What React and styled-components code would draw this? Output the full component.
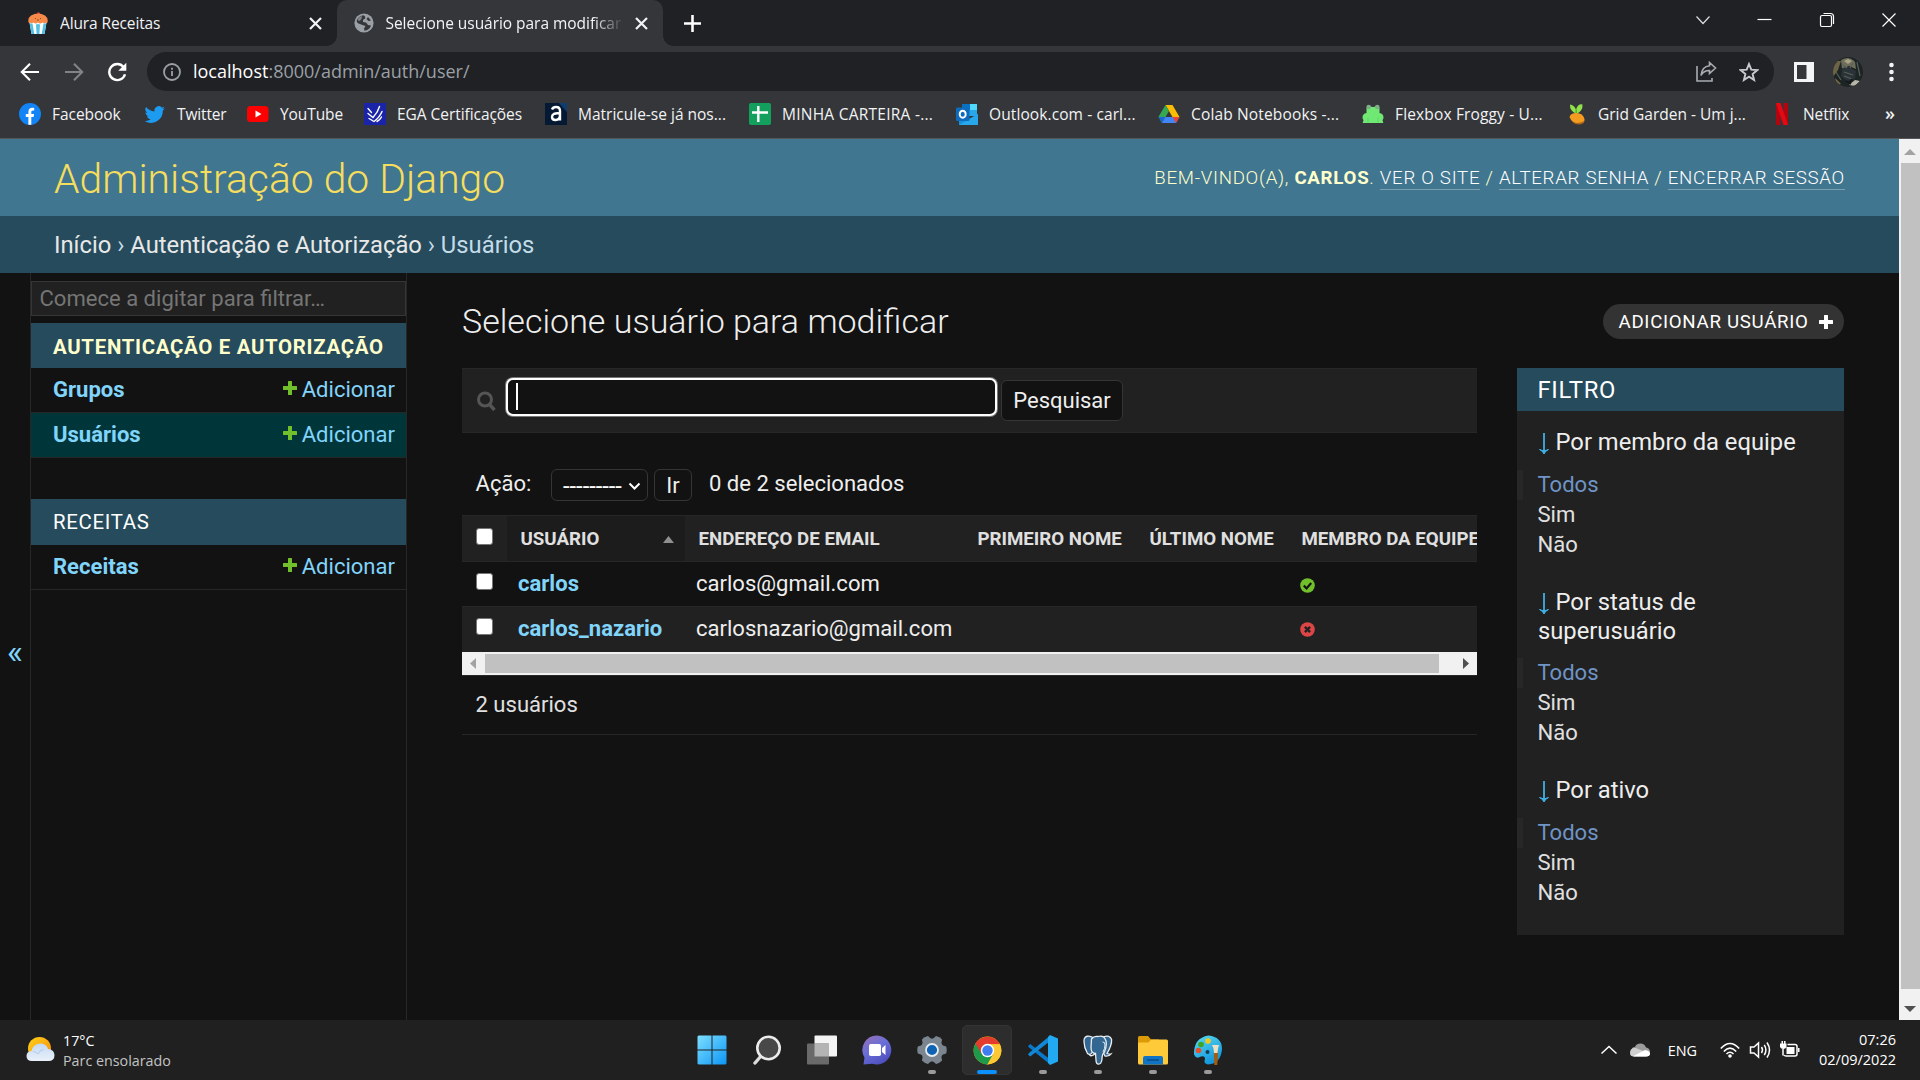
import React from "react";
import styled, { createGlobalStyle, css } from "styled-components";

const ui = '"Open Sans", "Noto Sans", sans-serif';
const roboto = 'Roboto, "Noto Sans", sans-serif';

const GlobalStyle = createGlobalStyle`
  *, *::before, *::after { box-sizing: border-box; }
  body { margin: 0; background: #121212; overflow: hidden; }
  svg { display: block; flex: none; }
`;

const Screen = styled.div`
  width: 1920px;
  height: 1080px;
  display: flex;
  flex-direction: column;
  overflow: hidden;
  background: #121212;
  white-space: nowrap;
`;

/* ---------- browser window ---------- */

const TabStrip = styled.div`
  height: 46px;
  flex: none;
  display: flex;
  align-items: stretch;
  background: #202124;
  color: #f1f3f4;
  font: 15.5px/20px ${ui};
`;

const Tab = styled.div`
  position: relative;
  display: flex;
  align-items: center;
  width: ${(p) => p.$width}px;
  padding: 0 ${(p) => p.$right}px 0 ${(p) => p.$left}px;
  gap: ${(p) => p.$gap}px;
  ${(p) =>
    p.$active &&
    css`
      background: #35363a;
      border-radius: 10px 10px 0 0;
      &::before,
      &::after {
        content: "";
        position: absolute;
        bottom: 0;
        width: 10px;
        height: 10px;
      }
      &::before {
        left: -10px;
        background: radial-gradient(circle at 0 0, transparent 9.5px, #35363a 10px);
      }
      &::after {
        right: -10px;
        background: radial-gradient(circle at 100% 0, transparent 9.5px, #35363a 10px);
      }
    `}
`;

const TabTitle = styled.span`
  flex: 1;
  min-width: 0;
  overflow: hidden;
  letter-spacing: ${(p) => p.$spacing || 0}px;
  ${(p) => p.$fade && "mask-image: linear-gradient(90deg, #000 87%, transparent 100%);"}
`;

const NewTab = styled.div`
  display: flex;
  align-items: center;
  padding-left: 21px;
`;

const WindowButtons = styled.div`
  margin-left: auto;
  display: flex;
  align-items: flex-start;
  padding: 12px 23px 0 0;
  gap: 46px;
`;

const Toolbar = styled.div`
  height: 50px;
  flex: none;
  display: flex;
  align-items: center;
  background: #35363a;
  padding: 1px 20px 0 20px;
`;

const NavButtons = styled.div`
  display: flex;
  width: 127px;
  gap: 23.5px;
`;

const AddressBar = styled.div`
  width: 1627px;
  height: 39px;
  border-radius: 20px;
  background: #202124;
  display: flex;
  align-items: center;
  padding: 0 15px 0 16px;
  color: #9aa0a6;
  font: 18px/24px ${ui};
`;

const Url = styled.span`
  flex: 1;
  padding: 0 0 1px 12px;
`;

const Host = styled.span`
  color: #fff;
`;

const AddressActions = styled.div`
  display: flex;
  gap: 22px;
  align-items: center;
`;

const ToolbarActions = styled.div`
  display: flex;
  align-items: center;
  padding-left: 20px;
`;

const AvatarWrap = styled.div`
  padding: 0 26px 0 19px;
`;

const Bookmarks = styled.div`
  height: 43px;
  flex: none;
  display: flex;
  align-items: center;
  background: #35363a;
  border-bottom: 1px solid #56575b;
  padding: 0 0 6px 19px;
  color: #f1f3f4;
  font: 15.5px/20px ${ui};
`;

const Bookmark = styled.div`
  width: ${(p) => p.$width}px;
  display: flex;
  align-items: center;
  gap: 11px;
  letter-spacing: ${(p) => p.$spacing || 0}px;
`;

const Overflow = styled.span`
  font: 600 18px/20px ${ui};
  padding-bottom: 3px;
  margin-left: -1px;
`;

const Viewport = styled.div`
  height: 881px;
  flex: none;
  display: flex;
  background: #121212;
`;

const PageScroll = styled.div`
  width: 21px;
  background: #f1f1f1;
  display: flex;
  flex-direction: column;
  align-items: center;
  justify-content: space-between;
`;

const PageThumb = styled.div`
  flex: 1;
  align-self: stretch;
  margin-left: 2px;
  background: #c1c1c1;
`;

const ScrollArrow = styled.div`
  height: ${(p) => p.$height}px;
  display: flex;
  align-items: center;
  padding-top: ${(p) => p.$shift || 0}px;
`;

/* ---------- admin page ---------- */

const Page = styled.div`
  flex: 1;
  min-width: 0;
  display: flex;
  flex-direction: column;
  font-family: ${roboto};
  color: #eee;
`;

const Header = styled.header`
  height: 77px;
  flex: none;
  display: flex;
  align-items: center;
  justify-content: space-between;
  padding: 1px 54px 0 55px;
  background: #417690;
`;

const SiteName = styled.h1`
  margin: 2px 0 0 -1px;
  font-size: 40.85px;
  line-height: 50px;
  font-weight: 300;
  color: #f5dd5d;
`;

const UserTools = styled.div`
  font-size: 18.7px;
  line-height: 24px;
  font-weight: 300;
  letter-spacing: 0.71px;
  text-transform: uppercase;
  color: #ffc;
  padding-bottom: 1px;
  strong { font-weight: 700; }
`;

const ToolLink = styled.a`
  color: #fff;
  border-bottom: 1px solid rgba(255, 255, 255, 0.3);
`;

const Breadcrumbs = styled.div`
  height: 57px;
  flex: none;
  padding: 1px 0 0 54px;
  background: #264b5d;
  color: #c4dce8;
  font-size: 23.8px;
  line-height: 57px;
  a { color: #e8e8e8; }
`;

const Columns = styled.div`
  flex: 1;
  min-height: 0;
  display: flex;
`;

const Toggle = styled.div`
  width: 30px;
  display: flex;
  align-items: center;
  justify-content: center;
  padding-top: 8px;
  color: #81d4fa;
  font-size: 34px;
`;

const Sidebar = styled.nav`
  width: 377px;
  border: solid #272727;
  border-width: 0 1px;
  padding-top: 8px;
`;

const QuickFilter = styled.div`
  height: 35px;
  margin-bottom: 7px;
  border: 1px solid #353535;
  background: #212121;
  color: #757575;
  padding-left: 7.5px;
  font-size: 22.05px;
  line-height: 33px;
`;

const AppGroup = styled.section`
  margin-bottom: 41px;
`;

const Caption = styled.h2`
  margin: 0;
  height: ${(p) => (p.$current ? 45 : 46)}px;
  line-height: 46px;
  padding: ${(p) => (p.$current ? 1 : 0)}px 0 0 22px;
  background: #264b5d;
  color: ${(p) => (p.$current ? "#ffc" : "#fff")};
  font-size: 20.4px;
  font-weight: ${(p) => (p.$current ? 700 : 400)};
  letter-spacing: 0.7px;
  text-transform: uppercase;
`;

const ModelRow = styled.div`
  height: 45px;
  display: flex;
  align-items: center;
  padding: 0 11px 1px 22px;
  border-bottom: 1px solid #272727;
  background: ${(p) => (p.$current ? "#00363a" : "transparent")};
  color: #81d4fa;
  font-size: 22.05px;
  line-height: 30px;
`;

const ModelName = styled.a`
  flex: 1;
  font-weight: 700;
`;

const AddLink = styled.a`
  display: flex;
  align-items: center;
  gap: 5px;
  svg { margin-bottom: 4px; }
`;

const Content = styled.main`
  flex: 1;
  padding: 31px 55px 0 55px;
`;

const TitleRow = styled.div`
  height: 35px;
  display: flex;
  align-items: center;
  justify-content: space-between;
  margin-bottom: 29px;
`;

const PageTitle = styled.h1`
  margin: -1px 0 0;
  font-size: 34px;
  line-height: 40px;
  font-weight: 300;
`;

const AddUser = styled.a`
  width: 241px;
  height: 35px;
  display: flex;
  align-items: center;
  padding: 0 11px 0 15.5px;
  justify-content: space-between;
  border-radius: 18px;
  background: #333;
  color: #fff;
  font-size: 18.7px;
  letter-spacing: 0.7px;
  text-transform: uppercase;
`;

const Changelist = styled.div`
  display: flex;
  align-items: flex-start;
  gap: 40px;
`;

const Module = styled.div`
  width: 1015px;
`;

const SearchBar = styled.div`
  height: 65px;
  display: flex;
  align-items: center;
  padding: 0 0 0 14.5px;
  border: solid #272727;
  border-width: 1px 0;
  background: #212121;
`;

const SearchInput = styled.div`
  width: 491px;
  height: 38px;
  margin: 0 4.5px 8px 10px;
  border: 2px solid #fff;
  border-radius: 7px;
  box-shadow: 0 0 0 1px #777;
  background: #121212;
  display: flex;
  align-items: center;
  padding-left: 8px;
`;

const Caret = styled.div`
  width: 2px;
  height: 27px;
  background: #fff;
`;

const SearchButton = styled.div`
  width: 122px;
  height: 41px;
  border: 1px solid #353535;
  border-radius: 6px;
  background: #121212;
  text-align: center;
  font-size: 22px;
  line-height: 39px;
`;

const Actions = styled.div`
  height: 82px;
  display: flex;
  align-items: center;
  padding: 22px 0 0 13.5px;
  font-size: 22.05px;
  line-height: 32px;
`;

const ActionLabel = styled.span`
  width: 75.5px;
  margin-top: -3px;
`;

const Select = styled.div`
  width: 97px;
  height: 32px;
  display: flex;
  align-items: center;
  justify-content: space-between;
  padding: 2px 6px 0 11px;
  border: 1px solid #353535;
  border-radius: 6px;
  font-size: 23.7px;
  color: #fff;
`;

const GoButton = styled.div`
  width: 38px;
  height: 32px;
  margin: 0 17px 0 6px;
  border: 1px solid #353535;
  border-radius: 6px;
  text-align: center;
  line-height: 31px;
`;

const Counter = styled.span`
  margin-top: -2px;
`;

const Results = styled.div`
  overflow: hidden;
  border-bottom: 1px solid #272727;
`;

const columns = "45px 178px 279px 172px 152px 240px";

const HeadRow = styled.div`
  height: 47px;
  display: grid;
  grid-template-columns: ${columns};
  border: solid #272727;
  border-width: 1px 0;
  background: #212121;
  font-size: 18.7px;
  font-weight: 700;
  line-height: 45px;
  color: #e0e0e0;
`;

const HeadCell = styled.div`
  height: 45px;
  padding: 1px 11px 0 13.5px;
  display: flex;
  align-items: center;
  justify-content: space-between;
  background: ${(p) => (p.$sorted ? "#1c1c1c" : "transparent")};
`;

const Row = styled.div`
  height: ${(p) => p.$height}px;
  display: grid;
  grid-template-columns: ${columns};
  align-items: center;
  padding-bottom: ${(p) => (p.$alt ? 2 : 0)}px;
  background: ${(p) => (p.$alt ? "#212121" : "transparent")};
  border-top: ${(p) => (p.$alt ? "1px solid #272727" : "0")};
  font-size: 22.05px;
  line-height: 30px;
`;

const Cell = styled.div`
  padding: ${(p) => (p.$icon ? "2px 0 0 12px" : "0 0 0 11px")};
`;

const UserLink = styled.a`
  font-weight: 700;
  color: #81d4fa;
`;

const CheckCell = styled.div`
  padding: 0 0 5px 13.5px;
  align-self: center;
`;

const Checkbox = styled.div`
  width: 17px;
  height: 17px;
  border: 1px solid #767676;
  border-radius: 3px;
  background: #fff;
`;

const HScroll = styled.div`
  height: 23px;
  display: flex;
  align-items: center;
  background: #f1f1f1;
`;

const HArrow = styled.div`
  width: ${(p) => p.$width}px;
  padding-left: ${(p) => p.$inset}px;
`;

const HThumb = styled.div`
  flex: 1;
  height: 19px;
  background: #c1c1c1;
`;

const Paginator = styled.p`
  margin: 0;
  height: 59px;
  padding: 0 0 0 13.5px;
  border-bottom: 1px solid #272727;
  color: #e0e0e0;
  font-size: 22.05px;
  line-height: 57px;
`;

const FilterPanel = styled.aside`
  width: 327px;
  height: 567px;
  background: #212121;
`;

const FilterHead = styled.h2`
  margin: 0;
  height: 43px;
  padding: 1px 0 0 20.5px;
  background: #264b5d;
  color: #fff;
  font-size: 23.8px;
  font-weight: 400;
  line-height: 43px;
  letter-spacing: 0.69px;
  text-transform: uppercase;
`;

const FilterTitle = styled.h3`
  margin: 0;
  padding: ${(p) => (p.$first ? "16.5px 30px 14px 21px" : "28px 30px 13px 21px")};
  font-size: 23.75px;
  font-weight: 400;
  line-height: 28.5px;
  white-space: normal;
  svg {
    display: inline-block;
    vertical-align: -5px;
    margin: 0 6.5px 0 1px;
  }
`;

const FilterItem = styled.div`
  height: 30px;
  padding-left: ${(p) => (p.$on ? 14.5 : 20.5)}px;
  border-left: ${(p) => (p.$on ? "6px solid #272727" : "0")};
  color: ${(p) => (p.$on ? "#6f94c6" : "#e0e0e0")};
  font-size: 22.05px;
  line-height: 30.5px;
`;

/* ---------- taskbar ---------- */

const Taskbar = styled.div`
  height: 60px;
  flex: none;
  display: flex;
  justify-content: space-between;
  background: #202020;
  color: #fff;
  font: 14.3px/20px ${ui};
`;

const Weather = styled.div`
  width: 687px;
  display: flex;
  align-items: center;
  gap: 8px;
  padding: 0 0 0 26px;
  svg { margin-bottom: 3px; }
`;

const WeatherText = styled.div`
  display: flex;
  flex-direction: column;
  padding-top: 2px;
  span:last-child { color: #c3c3c3; }
`;

const Apps = styled.div`
  display: flex;
  flex: 1;
  gap: 5.1px;
  padding-top: 5px;
`;

const AppButton = styled.div`
  width: 50px;
  height: 50px;
  position: relative;
  display: flex;
  align-items: center;
  justify-content: center;
  border-radius: 5px;
  background: ${(p) => (p.$active ? "#2d2d2d" : "transparent")};
  border: 1px solid ${(p) => (p.$active ? "#343434" : "transparent")};
  &::after {
    content: "";
    position: absolute;
    bottom: 0;
    left: 50%;
    transform: translateX(-50%);
    height: 4px;
    border-radius: 2px;
    width: ${(p) => (p.$active ? 20 : p.$open ? 8 : 0)}px;
    background: ${(p) => (p.$active ? "#0a90ff" : "#9a9a9a")};
  }
`;

const Tray = styled.div`
  display: flex;
  align-items: center;
  padding-right: 24px;
`;

const Lang = styled.span`
  margin: 0 23px 0 18px;
  padding-top: 1px;
  font-size: 14.4px;
`;

const Clock = styled.div`
  width: 96px;
  display: flex;
  flex-direction: column;
  text-align: right;
  font-size: 14.5px;
`;

/* ---------- icons ---------- */

const Cross = ({ size = 13, w = 2.2 }) => (
  <svg width={size} height={size} viewBox="0 0 13 13" stroke="#f1f3f4" strokeWidth={w} strokeLinecap="butt">
    <path d="M1 1l11 11M12 1L1 12" />
  </svg>
);

const CupcakeIcon = () => (
  <svg width="20" height="22" viewBox="0 0 20 22">
    <circle cx="10.5" cy="2" r="1.7" fill="#d93a3f" />
    <path d="M3 3.5Q10-.5 17 3.5 20.500 6 19.500 10.500Q17 12.500 14.500 11 12 13 10 11 8 13 5.500 11 3 12.500.5 10.500-.5 6 3 3.500z" fill="#f58a4b" />
    <path d="M1.500 10.500q2 1.500 4 0 2.500 2 4.500 0 2 2 4.500 0 2 1.500 4 0L16.500 22h-13z" fill="#fff" />
    <path d="M4.500 11.500l1.800 10.500H3.500L1.700 11.500zM10 12l2 .5-.6 9.500H8.600L8 12.500zM15.500 11.500h2.800L16.500 22h-2.800z" fill="#4fc0e3" />
    <path d="M7 6.500h1M12 6.500h1M9 8h2" stroke="#9c4a20" />
  </svg>
);

const GlobeIcon = () => (
  <svg width="20" height="20" viewBox="0 0 20 20">
    <circle cx="10" cy="10" r="9.600" fill="#9aa0a6" />
    <path d="M3 6.500Q5 3 9.500 2.300 12 3.500 11 5.500L9 7v2l3 .5 2 2.500 3 .5Q15.500 17 10.500 17.800L10 15.500 11.500 13 8.500 12 4.500 10.500Q2 9 3 6.500zM14 4l3 3.500-2.500.5-2-2z" fill="#35363a" />
    <path d="M3.500 7Q4 4.500 8 3L7.500 6 5.500 8zM7 12.500l3.500 1-1.500 3Q6 15 5 12z" fill="#9aa0a6" opacity=".75" />
  </svg>
);

const FacebookIcon = () => (
  <svg width="22" height="22" viewBox="0 0 22 22">
    <circle cx="11" cy="11" r="11" fill="#1284f5" />
    <path d="M9.400 21.800V14H6.800v-3h2.600V8.800c0-2.700 1.500-4.100 3.900-4.100.9 0 1.900.2 1.900.2v2.500h-1.300c-1.200 0-1.600.8-1.600 1.600v2h2.800l-.5 3h-2.300v7.800z" fill="#fff" />
  </svg>
);

const TwitterIcon = () => (
  <svg width="22" height="22" viewBox="0 0 26 26">
    <path fill="#1d9bf0" d="M24.600 6.100c-.9.400-1.800.7-2.800.8 1-.6 1.800-1.600 2.200-2.700-1 .6-2 1-3.100 1.200a4.900 4.900 0 0 0-8.400 4.500C8.400 9.700 4.800 7.800 2.400 4.800a4.900 4.900 0 0 0 1.500 6.600c-.8 0-1.600-.2-2.200-.6v.1c0 2.400 1.700 4.400 3.900 4.800-.7.200-1.500.2-2.200.1.600 2 2.400 3.400 4.600 3.400A9.900 9.900 0 0 1 .7 21.200a13.900 13.900 0 0 0 21.500-12.400c1-.7 1.800-1.600 2.400-2.700z" />
  </svg>
);

const YoutubeIcon = () => (
  <svg width="22" height="16" viewBox="0 0 22 16">
    <rect width="21.500" height="16" rx="3.500" fill="#f00" />
    <path d="M8.500 4.500v7l6-3.500z" fill="#fff" />
  </svg>
);

const EgaIcon = () => (
  <svg width="22" height="22" viewBox="0 0 22 22">
    <rect width="22" height="22" fill="#1a24a8" />
    <g fill="none" stroke="#fff" strokeWidth="1.400" strokeLinecap="round">
      <path d="M4 5.500L7.500 9.500M4 10.500L9 14.500Q14 9 15.500 3.500M5 15.500L10 18.500Q15.500 14.500 18 8.500M13 18.500Q16 17 17.500 14" />
    </g>
  </svg>
);

const AluraIcon = () => (
  <svg width="22" height="22" viewBox="0 0 22 22">
    <rect width="22" height="22" fill="#051933" />
    <path d="M14 0h8v9z" fill="#0e3e70" />
    <path d="M7 6.500Q8 4 11 4q4 0 4 4v9.500M15 10.500Q7 9.500 7 14q0 3 3.500 3 4.500 0 4.500-5" fill="none" stroke="#fff" strokeWidth="2.400" />
  </svg>
);

const SheetIcon = () => (
  <svg width="22" height="22" viewBox="0 0 22 22">
    <rect width="22" height="22" rx="2" fill="#12a05c" />
    <path d="M9.300 3v16M3 9.500h16" stroke="#fff" strokeWidth="2.400" />
  </svg>
);

const OutlookIcon = () => (
  <svg width="22" height="22" viewBox="0 0 22 22">
    <path d="M6 1h15v12H6z" fill="#28a8ea" />
    <path d="M14 1h7v6h-7z" fill="#50d9ff" />
    <path d="M6 1h8v6H6z" fill="#0a70c0" />
    <path d="M3 11l10 5 9-5v11H3z" fill="#1490df" />
    <path d="M3 22l19-11v10q0 1-1 1z" fill="#28a8ea" />
    <rect y="4.500" width="13.500" height="13.500" rx="1.500" fill="#0f6cbd" />
    <ellipse cx="6.700" cy="11.200" rx="3" ry="3.500" fill="none" stroke="#fff" strokeWidth="1.900" />
  </svg>
);

const DriveIcon = () => (
  <svg width="22" height="20" viewBox="0 0 22 20">
    <path d="M7.500 1h7l7 12h-7z" fill="#fbbc04" />
    <path d="M7.500 1L11 7 4 19 .5 12.800z" fill="#34a853" />
    <path d="M7.200 13h14.300L18 19H4z" fill="#4285f4" />
    <path d="M14.500 13h7L18 19z" fill="#ea4335" />
    <path d="M7.200 13H.500L4 19z" fill="#1967d2" />
  </svg>
);

const FrogIcon = () => (
  <svg width="22" height="20" viewBox="0 0 22 20">
    <path d="M4.500 4Q5 1.500 7.500 2q1.500 1 3.500 1t3.500-1q2.500-.5 3 2v5q4 .5 4 4.500 0 1.500-1 2.500l.8 3H.7l.8-3q-1-1-1-2.500 0-4 4-4.500z" fill="#6fe874" />
    <circle cx="6.700" cy="3" r="2.300" fill="#7fae88" />
    <circle cx="15.300" cy="3" r="2.300" fill="#7fae88" />
    <path d="M6 18.500v-5M16 18.500v-5" stroke="#5fd665" />
  </svg>
);

const CarrotIcon = () => (
  <svg width="20" height="22" viewBox="0 0 20 22">
    <path d="M9.500 11Q2.500 8 3 1.500 7 2 9 6.500 11 .5 15.500 1.500 16 8 9.500 11z" fill="#8fe04a" />
    <path d="M9.200 11V6.500" stroke="#58a826" strokeWidth="1.400" />
    <path d="M2.500 14q1-3.800 7-4 6.500.2 8 6 .5 4-4.500 5-8 0-10.500-7z" fill="#f39c1f" />
    <path d="M5 18.500q5 3 12.500-.5-1 3.500-5.500 3.500-4.500 0-7-3z" fill="#a8641a" />
  </svg>
);

const NetflixIcon = () => (
  <svg width="20" height="22" viewBox="0 0 20 22">
    <path d="M4 0h4.500v22H4zM11.500 0H16v22h-4.500z" fill="#b1060f" />
    <path d="M4 0h4.500L16 22h-4.500z" fill="#e50914" />
  </svg>
);

const PlusIcon = ({ color = "#70bf2b" }) => (
  <svg width="14" height="14" viewBox="0 0 14 14">
    <path d="M5.600 0h2.800q.6 0 .6.600V5h4.400q.6 0 .6.600v2.800q0 .6-.6.600H9v4.400q0 .6-.6.600H5.600q-.6 0-.6-.6V9H.6Q0 9 0 8.400V5.600Q0 5 .6 5H5V.6Q5 0 5.600 0z" fill={color} />
  </svg>
);

const DownArrow = () => (
  <svg width="10" height="22" viewBox="0 0 10 22" fill="none" stroke="#41b0e4">
    <path d="M5 0v19" strokeWidth="1.800" />
    <path d="M.5 16.500Q3.500 17.500 5 21 6.500 17.500 9.500 16.500L5 18z" fill="#41b0e4" strokeWidth="1" />
  </svg>
);

const SearchIcon = () => (
  <svg width="19" height="20" viewBox="0 0 19 20" fill="none" stroke="#555">
    <circle cx="8" cy="8.500" r="6.500" strokeWidth="3" />
    <path d="M12.500 13.500l5 5.500" strokeWidth="3.400" />
  </svg>
);

const YesIcon = () => (
  <svg width="15" height="15" viewBox="0 0 15 15">
    <circle cx="7.500" cy="7.500" r="7.300" fill="#70bf2b" />
    <path d="M3.800 7.500l2.700 2.900 4.700-5.400" fill="none" stroke="#121212" strokeWidth="2.200" />
  </svg>
);

const NoIcon = () => (
  <svg width="15" height="15" viewBox="0 0 15 15">
    <circle cx="7.500" cy="7.500" r="7.300" fill="#dd4646" />
    <path d="M4.900 4.900l5.200 5.200M10.100 4.900l-5.200 5.200" stroke="#212121" strokeWidth="2.400" />
  </svg>
);

const Triangle = ({ d, w, h, color }) => (
  <svg width={w} height={h} viewBox={`0 0 ${w} ${h}`}>
    <path d={d} fill={color} />
  </svg>
);

const WeatherIcon = () => (
  <svg width="29" height="26" viewBox="0 0 29 26">
    <defs>
      <linearGradient id="sun" x1="0" y1="0" x2="1" y2="1">
        <stop offset="0" stopColor="#ffd21c" />
        <stop offset="1" stopColor="#f58a07" />
      </linearGradient>
      <linearGradient id="cloud" x1="0" y1="0" x2="0" y2="1">
        <stop offset="0" stopColor="#c3d9f2" />
        <stop offset="1" stopColor="#eaf1fa" />
      </linearGradient>
    </defs>
    <circle cx="13.500" cy="12.500" r="11.500" fill="url(#sun)" />
    <path d="M6 25q-5.500 0-5.500-5 0-4.500 5-5Q7 8 14 7.500q6.500 0 8 5.500 6 .5 6.500 6 0 6-6 6z" fill="url(#cloud)" />
    <path d="M7 15.500q3 0 5 2.500 1.500-4 5.500-4.500" fill="none" stroke="#a7c2e4" strokeWidth=".8" />
  </svg>
);

const WindowsIcon = () => (
  <svg width="30" height="30" viewBox="0 0 30 30">
    <defs>
      <linearGradient id="win" gradientUnits="userSpaceOnUse" x1="0" y1="0" x2="30" y2="30">
        <stop offset="0" stopColor="#7fe0ff" />
        <stop offset="1" stopColor="#0a94f5" />
      </linearGradient>
    </defs>
    <path d="M1.500.5H14.500v14H.5v-13zM15.500.5H28.500l1 1v13h-14zM.5 15.500H14.500v14H1.500l-1-1zM15.500 15.500h14v13l-1 1h-13z" fill="url(#win)" />
  </svg>
);

const TaskSearchIcon = () => (
  <svg width="30" height="30" viewBox="0 0 30 30">
    <path d="M9.500 20.500L3 28" stroke="#dcdcdc" strokeWidth="3.400" strokeLinecap="round" />
    <circle cx="16.500" cy="13" r="11.200" fill="#484848" stroke="#ececec" strokeWidth="2.600" />
  </svg>
);

const TaskViewIcon = () => (
  <svg width="30" height="30" viewBox="0 0 30 30">
    <rect x="7.500" y=".5" width="22.500" height="21" rx="1" fill="#f4f4f4" />
    <rect x="0" y="8.500" width="22" height="21" rx="1" fill="#6a6a6a" />
    <path d="M7.500 8.500H22v13H7.500z" fill="#b4b4b4" />
  </svg>
);

const ChatIcon = () => (
  <svg width="30" height="30" viewBox="0 0 30 30">
    <defs>
      <linearGradient id="chat" x1="0" y1="0" x2=".6" y2="1">
        <stop offset="0" stopColor="#9a6fb0" />
        <stop offset=".5" stopColor="#6a6fd8" />
        <stop offset="1" stopColor="#4f50c0" />
      </linearGradient>
    </defs>
    <path d="M15 .5a14.500 14.500 0 1 1-5 28.200L1.500 29.500l1-7A14.500 14.500 0 0 1 15 .5z" fill="url(#chat)" />
    <rect x="7" y="9" width="12" height="12" rx="1.800" fill="#fff" />
    <path d="M20 13l3.500-3v10L20 17z" fill="#fff" />
  </svg>
);

const SettingsIcon = () => (
  <svg width="30" height="30" viewBox="0 0 30 30">
    <g fill="#7a858f">
      <circle cx="15" cy="15" r="11.500" />
      {[0, 60, 120, 180, 240, 300].map((a) => (
        <path key={a} d="M10 5.500L11.500.8Q15-.2 18.500.8L20 5.500z" transform={`rotate(${a + 30} 15 15)`} />
      ))}
    </g>
    <circle cx="15" cy="15" r="6" fill="#0f63b5" stroke="#e8ecef" strokeWidth="1.800" />
  </svg>
);

const ChromeIcon = () => (
  <svg width="29" height="29" viewBox="0 0 48 48">
    <circle cx="24" cy="24" r="23" fill="#fbbc04" />
    <path d="M24 24L4.100 12.500A23 23 0 0 0 24 47l10-17.300z" fill="#1e9a4b" />
    <path d="M24 13.500h20.400A23 23 0 0 0 4.100 12.500L14.500 30z" fill="#e33b2e" />
    <path d="M24 47A23 23 0 0 0 44.400 13.500H24l9.500 16z" fill="#fcc934" />
    <circle cx="24" cy="24" r="11" fill="#fff" />
    <circle cx="24" cy="24" r="8.600" fill="#3f7ef0" />
  </svg>
);

const CodeIcon = () => (
  <svg width="30" height="30" viewBox="0 0 30 30">
    <path d="M0 11l2.200-2 20 15.500v5L1 12.500z" fill="#0a78c8" />
    <path d="M0 19.500l2.200 2L22.200 6V.5L1 18z" fill="#1187d8" />
    <path d="M22 0l8 3.500v23L22 30l-2-2V2z" fill="#23a8f2" />
  </svg>
);

const ElephantIcon = () => (
  <svg width="30" height="30" viewBox="0 0 30 30" fill="#336791" stroke="#e8eef2" strokeWidth="1.300">
    <path d="M9 2Q3-.5 1.200 4 .2 11 4.500 18.500 7 21 9.500 17L10 3z" />
    <path d="M20 2Q27-.5 28.600 4.500 29 10 24 18.500q3 1 4 .5-1.500 2.500-6 2L20 17z" />
    <path d="M8.500 4Q11 .6 15 1.500 21-.3 23 6q1 5-1.500 11Q19 19 19 24q-.5 5-3.500 5.200Q13 29 13 25l-.5-6.500Q8 18.500 8 12.500z" />
    <path d="M12.500 18.500Q8.500 22 6.500 20" fill="none" />
    <path d="M19.500 7q2.500-.5 2.500 3t-2 7" fill="none" strokeWidth="1" />
  </svg>
);

const FolderIcon = () => (
  <svg width="30" height="30" viewBox="0 0 30 30">
    <path d="M0 2.500Q0 1 1.500 1H10l3 3.500h8V12H0z" fill="#dc9a08" />
    <path d="M0 7.500h10.500L13 4.500h15.500Q30 4.500 30 6v22q0 1.500-1.500 1.500h-27Q0 29.500 0 28z" fill="#ffca3a" />
    <path d="M5 29.500V23q0-2 2-2h16q2 0 2 2v6.500z" fill="#1173c4" />
    <path d="M9 25h12" stroke="#0b4f8f" strokeWidth="1.600" />
  </svg>
);

const PaintIcon = () => (
  <svg width="30" height="30" viewBox="0 0 30 30">
    <defs>
      <linearGradient id="paint" x1="0" y1="0" x2=".5" y2="1">
        <stop offset="0" stopColor="#5adcf2" />
        <stop offset="1" stopColor="#1496dc" />
      </linearGradient>
    </defs>
    <path d="M15.500.5Q29 2 29 14 28 28.500 15 29.500q-5-1-3-5.500 0-3.500-4-2.500-5 3-7-2Q.5 3 15.500.5z" fill="url(#paint)" />
    <circle cx="15" cy="6" r="2.800" fill="#f7c81e" />
    <circle cx="8" cy="9.500" r="2.800" fill="#3fa51c" />
    <circle cx="5.500" cy="15.500" r="2.800" fill="#e5502a" />
    <circle cx="14.500" cy="17" r="2" fill="#173a55" />
    <path d="M22.300 17h-1l.5 13h2l.8-13z" fill="#a35c10" stroke="#a35c10" />
    <path d="M19 10h7l-1 3.500-.5 4.500h-3.500l-.5-4.500z" fill="#f1dfc4" />
  </svg>
);

const bookmarks = [
  { name: "Facebook", width: 125, icon: <FacebookIcon />, spacing: -0.05 },
  { name: "Twitter", width: 103, icon: <TwitterIcon />, spacing: -0.15 },
  { name: "YouTube", width: 117, icon: <YoutubeIcon />, spacing: -0.1 },
  { name: "EGA Certificações", width: 181, icon: <EgaIcon />, spacing: -0.05 },
  { name: "Matricule-se já nos...", width: 204, icon: <AluraIcon /> },
  { name: "MINHA CARTEIRA -...", width: 207, icon: <SheetIcon />, spacing: 0.25 },
  { name: "Outlook.com - carl...", width: 202, icon: <OutlookIcon />, spacing: 0.1 },
  { name: "Colab Notebooks -...", width: 204, icon: <DriveIcon />, spacing: 0.15 },
  { name: "Flexbox Froggy - U...", width: 205, icon: <FrogIcon />, spacing: 0.15 },
  { name: "Grid Garden - Um j...", width: 205, icon: <CarrotIcon /> },
  { name: "Netflix", width: 114, icon: <NetflixIcon />, spacing: -0.1 },
];

const apps = [
  { id: "start", icon: <WindowsIcon /> },
  { id: "search", icon: <TaskSearchIcon /> },
  { id: "views", icon: <TaskViewIcon /> },
  { id: "chat", icon: <ChatIcon /> },
  { id: "settings", icon: <SettingsIcon />, open: true },
  { id: "chrome", icon: <ChromeIcon />, open: true, active: true },
  { id: "code", icon: <CodeIcon />, open: true },
  { id: "postgres", icon: <ElephantIcon />, open: true },
  { id: "files", icon: <FolderIcon />, open: true },
  { id: "paint", icon: <PaintIcon />, open: true },
];

const filters = ["Por membro da equipe", "Por status de superusuário", "Por ativo"];

const Model = ({ name, current }) => (
  <ModelRow $current={current}>
    <ModelName>{name}</ModelName>
    <AddLink>
      <PlusIcon />
      Adicionar
    </AddLink>
  </ModelRow>
);

const BrowserChrome = () => (
  <>
    <TabStrip>
      <Tab $width={337} $left={28} $right={15} $gap={12}>
        <CupcakeIcon />
        <TabTitle $spacing={-0.12}>Alura Receitas</TabTitle>
        <Cross />
      </Tab>
      <Tab $width={326} $left={17} $right={15} $gap={11.5} $active>
        <GlobeIcon />
        <TabTitle $fade $spacing={-0.04}>Selecione usuário para modificar</TabTitle>
        <Cross />
      </Tab>
      <NewTab>
        <svg width="17" height="17" viewBox="0 0 16 16" stroke="#fff" strokeWidth="2.400">
          <path d="M8 0v16M0 8h16" />
        </svg>
      </NewTab>
      <WindowButtons>
        <svg width="16" height="16" viewBox="0 0 16 16" fill="none" stroke="#ddd" strokeWidth="1.200">
          <path d="M1.500 4.500L8 11.500l6.500-7" />
        </svg>
        <svg width="16" height="16" viewBox="0 0 16 16" stroke="#fff" strokeWidth="1.200">
          <path d="M.5 7.500h14" />
        </svg>
        <svg width="16" height="16" viewBox="0 0 16 16" fill="none" stroke="#fff" strokeWidth="1.200">
          <rect x="1.500" y="3.500" width="11" height="11" rx="1.500" />
          <path d="M4.500 1.500h7q3 0 3 3v7.500" />
        </svg>
        <svg width="16" height="16" viewBox="0 0 16 16" stroke="#fff" strokeWidth="1.200">
          <path d="M1.500 1.500l13 13M14.500 1.500l-13 13" />
        </svg>
      </WindowButtons>
    </TabStrip>
    <Toolbar>
      <NavButtons>
        <svg width="20" height="20" viewBox="0 0 20 20" fill="none" stroke="#fff" strokeWidth="2.100">
          <path d="M19 10H2.500M10 1.800L1.800 10l8.200 8.200" />
        </svg>
        <svg width="20" height="20" viewBox="0 0 20 20" fill="none" stroke="#818386" strokeWidth="2.100">
          <path d="M1 10h16.500M10 1.800l8.200 8.200-8.200 8.200" />
        </svg>
        <svg width="20" height="20" viewBox="0 0 20 20" fill="none" stroke="#fff" strokeWidth="2.400">
          <path d="M16.500 5A8 8 0 1 0 18 12.200" />
          <path d="M19.300.8v8h-8z" fill="#fff" stroke="none" />
        </svg>
      </NavButtons>
      <AddressBar>
        <svg width="18" height="18" viewBox="0 0 18 18" fill="none" stroke="#9aa0a6" strokeWidth="1.800">
          <circle cx="9" cy="9" r="8" />
          <path d="M9 8v5M9 4.800v2" />
        </svg>
        <Url>
          <Host>localhost</Host>:8000/admin/auth/user/
        </Url>
        <AddressActions>
          <svg width="21" height="21" viewBox="0 0 21 21" fill="none" stroke="#a8adb2" strokeWidth="1.600">
            <path d="M1 5v15h15v-3" />
            <path d="M13.500 1.500l6 5.500-6 5.500V9.500Q7.500 9.500 5 14.500 6 5.500 13.500 4.800z" />
          </svg>
          <svg width="20" height="20" viewBox="0 0 20 20" fill="none" stroke="#c6cace" strokeWidth="1.900">
            <path d="M10 2l2.300 5.700 6 .4-4.700 3.900 1.500 6L10 14.700 4.900 18l1.500-6-4.700-3.900 6-.4z" />
          </svg>
        </AddressActions>
      </AddressBar>
      <ToolbarActions>
        <svg width="20" height="20" viewBox="0 0 20 20">
          <path d="M0 0h20v20H0z" fill="#f4f5f6" />
          <path d="M3 3h9.500v14H3z" fill="#35363a" />
        </svg>
        <AvatarWrap>
          <svg width="30" height="30" viewBox="0 0 30 30">
            <defs>
              <clipPath id="face">
                <circle cx="15" cy="15" r="15" />
              </clipPath>
            </defs>
            <g clipPath="url(#face)">
              <path d="M0 0h30v30H0z" fill="#1d2424" />
              <path d="M0 4h8L5 13 0 20z" fill="#6d6445" />
              <path d="M8 3Q16-2 22 5l1 7-7-3-7 3z" fill="#6f6e5a" />
              <path d="M11 4l4-2 4 2-4 3z" fill="#a8a486" />
              <path d="M9 11l7-1 7 4-1 8-8 2-6-5z" fill="#2a3338" />
              <path d="M11 15l9 3M11 19l8 3M24 5l3 14M3 15l5 8M10 8l4 3M20 6l-3 5" stroke="#56605a" strokeWidth="1.200" />
              <path d="M16 28l6-5 5 1-5 5z" fill="#b9b8a8" />
              <path d="M13 24l5 3M19 22l-3 4" stroke="#11181a" strokeWidth="1.500" />
              <path d="M2 21l6 6-4 1z" fill="#807347" />
            </g>
          </svg>
        </AvatarWrap>
        <svg width="5" height="20" viewBox="0 0 5 20" fill="#f1f3f4">
          <circle cx="2.500" cy="3" r="2.300" />
          <circle cx="2.500" cy="10" r="2.300" />
          <circle cx="2.500" cy="17" r="2.300" />
        </svg>
      </ToolbarActions>
    </Toolbar>
    <Bookmarks>
      {bookmarks.map((b) => (
        <Bookmark key={b.name} $width={b.width} $spacing={b.spacing}>
          {b.icon}
          {b.name}
        </Bookmark>
      ))}
      <Overflow>»</Overflow>
    </Bookmarks>
  </>
);

const UserRow = ({ name, email, staff, alt, height }) => (
  <Row $alt={alt} $height={height}>
    <CheckCell>
      <Checkbox />
    </CheckCell>
    <Cell>
      <UserLink>{name}</UserLink>
    </Cell>
    <Cell>{email}</Cell>
    <Cell />
    <Cell />
    <Cell $icon>{staff ? <YesIcon /> : <NoIcon />}</Cell>
  </Row>
);

export default function App() {
  return (
    <Screen>
      <GlobalStyle />
      <BrowserChrome />
      <Viewport>
        <Page>
          <Header>
            <SiteName>Administração do Django</SiteName>
            <UserTools>
              Bem-vindo(a), <strong>carlos</strong>. <ToolLink>Ver o site</ToolLink> /{" "}
              <ToolLink>Alterar senha</ToolLink> / <ToolLink>Encerrar sessão</ToolLink>
            </UserTools>
          </Header>
          <Breadcrumbs>
            <a>Início</a> › <a>Autenticação e Autorização</a> › Usuários
          </Breadcrumbs>
          <Columns>
            <Toggle>«</Toggle>
            <Sidebar>
              <QuickFilter>Comece a digitar para filtrar…</QuickFilter>
              <AppGroup>
                <Caption $current>Autenticação e Autorização</Caption>
                <Model name="Grupos" />
                <Model name="Usuários" current />
              </AppGroup>
              <AppGroup>
                <Caption>Receitas</Caption>
                <Model name="Receitas" />
              </AppGroup>
            </Sidebar>
            <Content>
              <TitleRow>
                <PageTitle>Selecione usuário para modificar</PageTitle>
                <AddUser>
                  Adicionar usuário
                  <PlusIcon color="#fff" />
                </AddUser>
              </TitleRow>
              <Changelist>
                <Module>
                  <SearchBar>
                    <SearchIcon />
                    <SearchInput>
                      <Caret />
                    </SearchInput>
                    <SearchButton>Pesquisar</SearchButton>
                  </SearchBar>
                  <Actions>
                    <ActionLabel>Ação:</ActionLabel>
                    <Select>
                      ---------
                      <svg width="13" height="9" viewBox="0 0 13 9" fill="none" stroke="#fff" strokeWidth="2">
                        <path d="M1.500 1.500l5 5 5-5" />
                      </svg>
                    </Select>
                    <GoButton>Ir</GoButton>
                    <Counter>0 de 2 selecionados</Counter>
                  </Actions>
                  <Results>
                    <HeadRow>
                      <CheckCell>
                        <Checkbox />
                      </CheckCell>
                      <HeadCell $sorted>
                        USUÁRIO
                        <Triangle w={11} h={7} d="M0 7L5.500 0 11 7z" color="#8f8f8f" />
                      </HeadCell>
                      <HeadCell>ENDEREÇO DE EMAIL</HeadCell>
                      <HeadCell>PRIMEIRO NOME</HeadCell>
                      <HeadCell>ÚLTIMO NOME</HeadCell>
                      <HeadCell>MEMBRO DA EQUIPE</HeadCell>
                    </HeadRow>
                    <UserRow name="carlos" email="carlos@gmail.com" height={44} staff />
                    <UserRow name="carlos_nazario" email="carlosnazario@gmail.com" height={46} alt />
                    <HScroll>
                      <HArrow $width={23} $inset={8}>
                        <Triangle w={6} h={11} d="M6 0v11L0 5.500z" color="#a3a3a3" />
                      </HArrow>
                      <HThumb />
                      <HArrow $width={38} $inset={24}>
                        <Triangle w={6} h={11} d="M0 0v11l6-5.500z" color="#505050" />
                      </HArrow>
                    </HScroll>
                  </Results>
                  <Paginator>2 usuários</Paginator>
                </Module>
                <FilterPanel>
                  <FilterHead>Filtro</FilterHead>
                  {filters.map((f, i) => (
                    <React.Fragment key={f}>
                      <FilterTitle $first={i === 0}>
                        <DownArrow />
                        {f}
                      </FilterTitle>
                      <FilterItem $on>Todos</FilterItem>
                      <FilterItem>Sim</FilterItem>
                      <FilterItem>Não</FilterItem>
                    </React.Fragment>
                  ))}
                </FilterPanel>
              </Changelist>
            </Content>
          </Columns>
        </Page>
        <PageScroll>
          <ScrollArrow $height={24} $shift={1}>
            <Triangle w={12} h={6} d="M0 6L6 0l6 6z" color="#a3a3a3" />
          </ScrollArrow>
          <PageThumb />
          <ScrollArrow $height={31} $shift={9}>
            <Triangle w={12} h={6} d="M0 0h12L6 6z" color="#505050" />
          </ScrollArrow>
        </PageScroll>
      </Viewport>
      <Taskbar>
        <Weather>
          <WeatherIcon />
          <WeatherText>
            <span>17°C</span>
            <span>Parc ensolarado</span>
          </WeatherText>
        </Weather>
        <Apps>
          {apps.map((a) => (
            <AppButton key={a.id} $open={a.open} $active={a.active}>
              {a.icon}
            </AppButton>
          ))}
        </Apps>
        <Tray>
          <svg width="18" height="10" viewBox="0 0 18 10" fill="none" stroke="#fff" strokeWidth="1.500">
            <path d="M1.500 8.500L9 1.500l7.500 7" />
          </svg>
          <svg width="32" height="14" viewBox="0 0 32 14">
            <path d="M14 8Q13 4 17 4 18 .5 22.500.5q4 0 5.500 4 4 .5 4 4.500l-4 1z" fill="#9b9b9b" />
            <path d="M12 10q0-4.500 4-5 2-.5 4 1l8 3q3-.5 4 1 0 3.500-4 3.500H16q-4 0-4-3.500z" fill="#cfcfcf" />
            <path d="M15 13.200L27 7q5 .5 5 3.500t-4 3H16z" fill="#fff" />
          </svg>
          <Lang>ENG</Lang>
          <svg width="20" height="17" viewBox="0 0 20 17" fill="none" stroke="#fff" strokeWidth="1.600">
            <path d="M.8 6.500Q10-3.500 19.200 6.500M3.800 9.500Q10 2.800 16.200 9.500M6.500 12Q10 8.500 13.500 12" />
            <circle cx="10" cy="14" r="1.800" fill="#fff" stroke="none" />
          </svg>
          <svg width="40" height="18" viewBox="0 0 40 18" fill="none" stroke="#fff" strokeWidth="1.500">
            <path d="M10.500 6h3.500L18.500 2v14l-4.500-4h-3.500z" />
            <path d="M21.500 6Q23.500 9 21.500 12M24.300 3.800Q27.500 9 24.300 14.200M27 1.500Q32 9 27 16.500" />
          </svg>
          <svg width="20" height="18" viewBox="0 0 20 18" fill="none" stroke="#fff" strokeWidth="1.500">
            <path d="M7.500 3.500H15q2 0 2 2v7.500q0 2-2 2H6q-1.500 0-2-1M3 8v6.500" />
            <path d="M6.500 6h8v7h-8zM0 2.500h1.500V0H3v2.500h1V0h1.500v2.500H6.500V6Q5.500 8 3.300 8 1 8 0 6zM18 7h1.500v4H18z" fill="#fff" stroke="none" />
          </svg>
          <Clock>
            <span>07:26</span>
            <span>02/09/2022</span>
          </Clock>
        </Tray>
      </Taskbar>
    </Screen>
  );
}
